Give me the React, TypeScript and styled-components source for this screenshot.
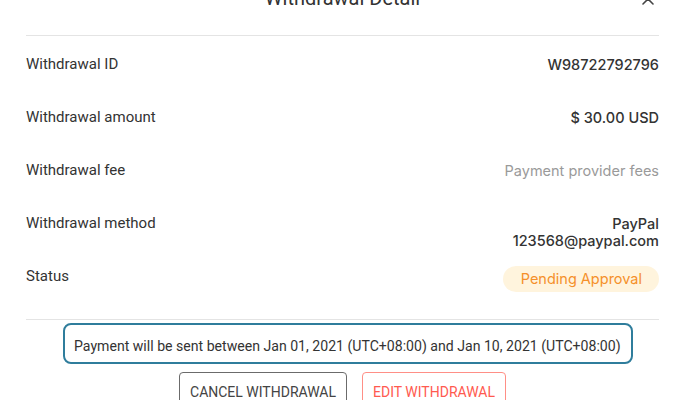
import React from 'react'
import styled, { createGlobalStyle } from 'styled-components'

const GlobalStyle = createGlobalStyle`
  html, body {
    margin: 0;
    padding: 0;
    background: #ffffff;
    overflow: hidden;
  }
  body {
    font-family: Roboto, "Liberation Sans", Arial, sans-serif;
    color: #333333;
  }
`

const Modal = styled.div`
  width: 633px;
  padding: 0 41px 0 26px;
  display: flex;
  flex-direction: column;
`

const Header = styled.div`
  display: grid;
  grid-template-columns: 1fr auto 1fr;
  align-items: start;
  height: 51px;
  margin-top: -16px;
  border-bottom: 1px solid #e4e4e4;
`

const Title = styled.h2`
  grid-column: 2;
  margin: 0;
  font-family: Roboto, "Liberation Sans", Arial, sans-serif;
  font-weight: 400;
  font-size: 20px;
  line-height: 28px;
  color: #333333;
`

const Close = styled.button`
  grid-column: 3;
  justify-self: end;
  margin: 6px 2px 0 0;
  width: 18px;
  height: 18px;
  padding: 0;
  border: 0;
  background: none;
  color: #444444;
  display: flex;
  align-items: center;
  justify-content: center;
`

const Rows = styled.div`
  display: flex;
  flex-direction: column;
  padding: 18px 0 0;
  border-bottom: 1px solid #e4e4e4;
`

const Row = styled.div`
  display: flex;
  justify-content: space-between;
  align-items: flex-start;
  height: 53px;
`

const Label = styled.span`
  font-size: 15px;
  line-height: 20px;
  color: #333333;
`

const Value = styled.span<{ $muted?: boolean }>`
  font-family: Inter, "Open Sans", "Liberation Sans", sans-serif;
  font-size: 14.5px;
  line-height: 17px;
  padding-top: 2px;
  font-weight: ${p => (p.$muted ? 400 : 500)};
  color: ${p => (p.$muted ? '#9a9a9a' : '#333333')};
  text-align: right;
  display: flex;
  flex-direction: column;
`

const Badge = styled.span`
  font-family: Inter, "Open Sans", "Liberation Sans", sans-serif;
  font-size: 14.5px;
  line-height: 26px;
  height: 26px;
  padding: 0 17px 0 18px;
  border-radius: 13px;
  background: #fff4dd;
  color: #f5902a;
`

const Footer = styled.div`
  display: flex;
  flex-direction: column;
  align-items: center;
  padding-top: 3px;
  gap: 8px;
`

const Notice = styled.div`
  box-sizing: border-box;
  width: 570px;
  height: 41px;
  margin-left: 11px;
  border: 2px solid #2f7d9c;
  border-radius: 8px;
  padding: 5px 0 0 9px;
  display: flex;
  align-items: center;
  font-size: 14.1px;
  color: #333333;
`

const Actions = styled.div`
  display: flex;
  gap: 15px;
`

const ActionButton = styled.button<{ $danger?: boolean; $w: number }>`
  box-sizing: border-box;
  width: ${p => p.$w}px;
  height: 40px;
  border-radius: 4px;
  background: #ffffff;
  border: 1px solid ${p => (p.$danger ? '#ff8f86' : '#6b6b6b')};
  color: ${p => (p.$danger ? '#ff5a4f' : '#444444')};
  font-family: Roboto, "Liberation Sans", Arial, sans-serif;
  font-size: 14px;
  text-transform: uppercase;
  padding: 0;
`

export default function App() {
  return (
    <>
      <GlobalStyle />
      <Modal>
        <Header>
          <Title>Withdrawal Detail</Title>
          <Close aria-label="close">
            <svg width="14" height="14" viewBox="0 0 14 14" fill="none" stroke="currentColor" strokeWidth="1.6" strokeLinecap="round">
              <path d="M2 2L12 12M12 2L2 12" />
            </svg>
          </Close>
        </Header>
        <Rows>
          <Row>
            <Label>Withdrawal ID</Label>
            <Value>W98722792796</Value>
          </Row>
          <Row>
            <Label>Withdrawal amount</Label>
            <Value>$ 30.00 USD</Value>
          </Row>
          <Row>
            <Label>Withdrawal fee</Label>
            <Value $muted>Payment provider fees</Value>
          </Row>
          <Row>
            <Label>Withdrawal method</Label>
            <Value>
              <span>PayPal</span>
              <span>123568@paypal.com</span>
            </Value>
          </Row>
          <Row>
            <Label>Status</Label>
            <Badge>Pending Approval</Badge>
          </Row>
        </Rows>
        <Footer>
          <Notice>Payment will be sent between Jan 01, 2021 (UTC+08:00) and Jan 10, 2021 (UTC+08:00)</Notice>
          <Actions>
            <ActionButton $w={168}>Cancel Withdrawal</ActionButton>
            <ActionButton $w={144} $danger>Edit Withdrawal</ActionButton>
          </Actions>
        </Footer>
      </Modal>
    </>
  )
}
